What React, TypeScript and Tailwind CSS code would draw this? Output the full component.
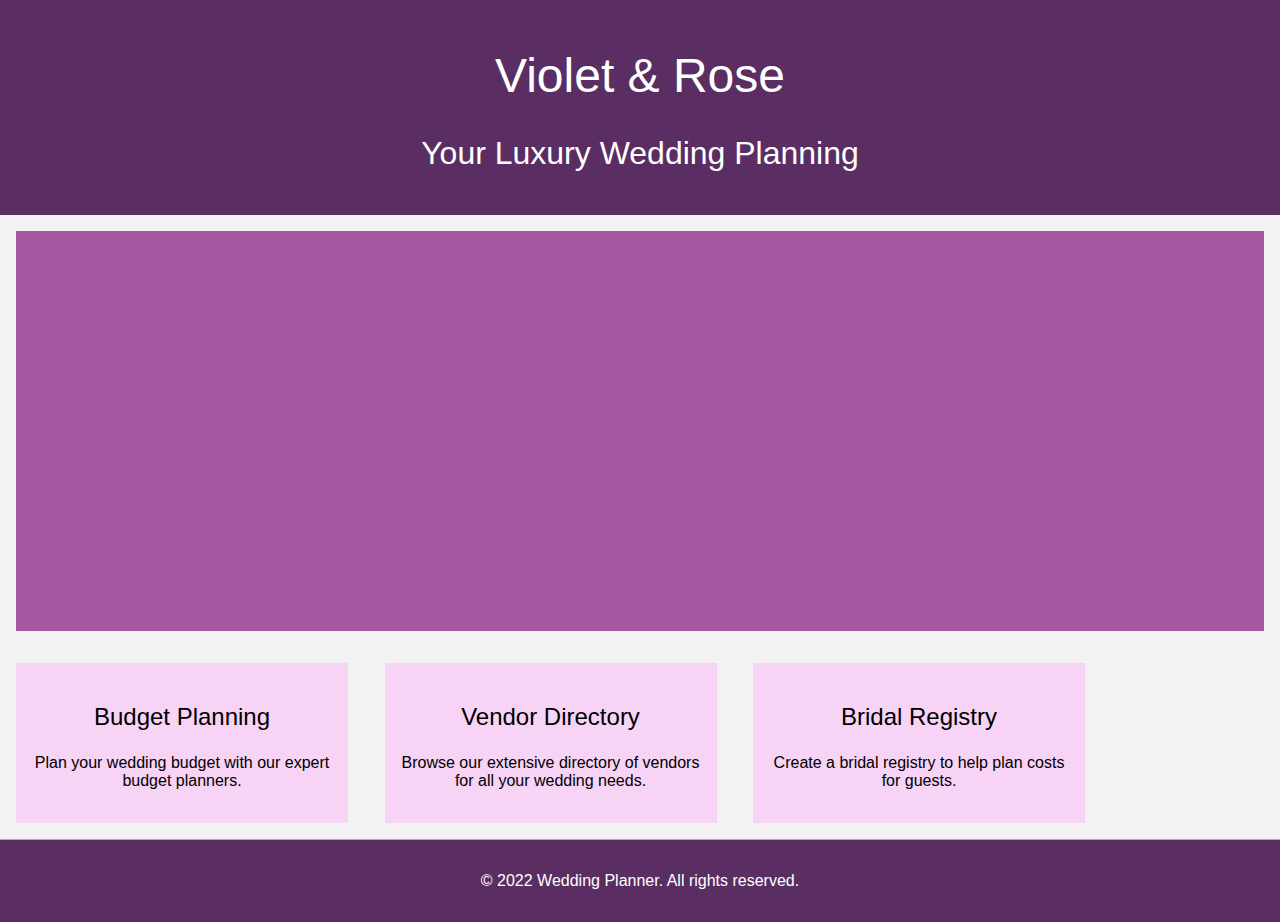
const services = [
  {
    title: 'Budget Planning',
    text: 'Plan your wedding budget with our expert budget planners.',
  },
  {
    title: 'Vendor Directory',
    text: 'Browse our extensive directory of vendors for all your wedding needs.',
  },
  {
    title: 'Bridal Registry',
    text: 'Create a bridal registry to help plan costs for guests.',
  },
];

export default function App() {
  return (
    <div className="min-h-[922px] bg-[#f2f2f2] font-['Liberation_Sans',Arial,sans-serif] text-black">
      <header className="bg-[#5a2e62] px-4 py-4 text-center text-white">
        <h1 className="my-8 text-[48px] leading-[55px]">Violet &amp; Rose</h1>
        <h2 className="mt-8 mb-[26.5px] text-[32px] leading-[37px]">Your Luxury Wedding Planning</h2>
      </header>

      <main className="p-4">
        <div className="h-[400px] w-full bg-[#a857a2]" />

        <section className="mt-8 flex gap-[36.5px]">
          {services.map((s) => (
            <div key={s.title} className="w-[332px] bg-[#f7d3f5] p-4 text-center">
              <h3 className="my-6 text-[24px] leading-[27.5px]">{s.title}</h3>
              <p className="mb-4 text-[16px] leading-[18.4px]">{s.text}</p>
            </div>
          ))}
        </section>
      </main>

      <footer className="border-t border-[#b4aab6] bg-[#5a2e62] px-4 py-4 text-center text-white">
        <p className="my-4 text-[16px] leading-[18.4px]">© 2022 Wedding Planner. All rights reserved.</p>
      </footer>
    </div>
  );
}
